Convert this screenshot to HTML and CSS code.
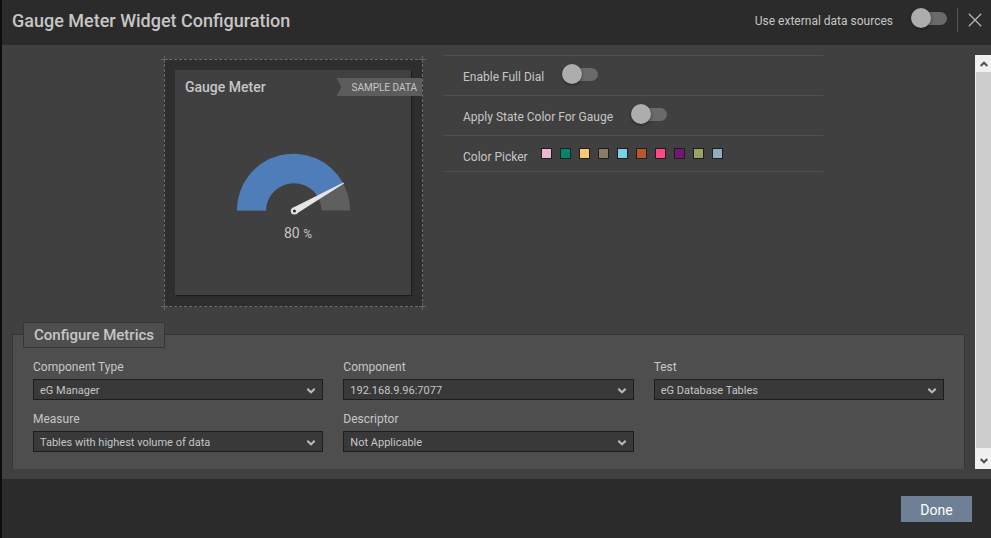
FILE: index.html
```html
<!DOCTYPE html>
<html lang="en">
<head>
<meta charset="utf-8">
<meta name="viewport" content="width=device-width, initial-scale=1">
<title>Gauge Meter Widget Configuration</title>
<link rel="stylesheet" href="styles.css">
</head>
<body>
<div class="dialog">
  <header class="header">
    <h1 class="title">Gauge Meter Widget Configuration</h1>
    <label class="header-label" for="external">Use external data sources</label>
    <input class="toggle" type="checkbox" id="external">
    <span class="divider"></span>
    <button class="close" type="button" aria-label="Close">
      <svg width="14" height="14" viewBox="0 0 14 14"><path d="M.8 .8 13.2 13.2M13.2 .8 .8 13.2" fill="none" stroke="#b4b4b4" stroke-width="1.3"/></svg>
    </button>
  </header>

  <main class="body">
    <div class="content">
      <div class="top">
        <div class="stage">
          <div class="frame">
            <span class="mark mark-tl"></span><span class="mark mark-tr"></span>
            <span class="mark mark-bl"></span><span class="mark mark-br"></span>
            <span class="ribbon">SAMPLE DATA</span>
            <section class="card">
              <h2 class="card-title">Gauge Meter</h2>
              <figure class="gauge">
                <svg width="116" height="64" viewBox="0 0 116 64" aria-hidden="true">
                  <path d="M2 58.5A56.5 56.5 0 0 1 115 58.5H86.5A28 28 0 0 0 30.500 58.5Z" fill="#5f5f5f"/>
                  <path d="M2 58.5A56.5 56.5 0 0 1 108 31L83 44.800A28 28 0 0 0 31 58.5Z" fill="#4f7dba"/>
                  <path d="M57.400 56 108.400 30.400 109 31.600 61 62Z" fill="#e6e6e6"/>
                  <circle cx="59.400" cy="59" r="2.600" fill="#333" stroke="#e6e6e6" stroke-width="2"/>
                </svg>
                <figcaption class="gauge-value">80 <span class="unit">%</span></figcaption>
              </figure>
            </section>
          </div>
        </div>
        <div class="settings">
          <div class="setting">
            <label for="dial">Enable Full Dial</label>
            <input class="toggle" type="checkbox" id="dial">
          </div>
          <div class="setting">
            <label for="state">Apply State Color For Gauge</label>
            <input class="toggle" type="checkbox" id="state">
          </div>
          <div class="setting setting-colors">
            <span>Color Picker</span>
            <div class="swatches">
              <button class="swatch pink" type="button" aria-label="Pink"></button>
              <button class="swatch green" type="button" aria-label="Green"></button>
              <button class="swatch yellow" type="button" aria-label="Yellow"></button>
              <button class="swatch taupe" type="button" aria-label="Taupe"></button>
              <button class="swatch sky" type="button" aria-label="Sky"></button>
              <button class="swatch rust" type="button" aria-label="Rust"></button>
              <button class="swatch rose" type="button" aria-label="Rose"></button>
              <button class="swatch purple" type="button" aria-label="Purple"></button>
              <button class="swatch olive" type="button" aria-label="Olive"></button>
              <button class="swatch slate" type="button" aria-label="Slate"></button>
            </div>
          </div>
        </div>
      </div>

      <section class="metrics">
        <h2 class="metrics-title">Configure Metrics</h2>
        <div class="fields">
          <div class="field">
            <label for="ctype">Component Type</label>
            <div class="picker"><select id="ctype"><option>eG Manager</option></select><svg class="arrow" width="8" height="6" viewBox="0 0 8 6"><path d="M.3 .8 4 4.3 7.7 .8" fill="none" stroke="#b8b8b8" stroke-width="2"/></svg></div>
          </div>
          <div class="field">
            <label for="component">Component</label>
            <div class="picker"><select id="component"><option>192.168.9.96:7077</option></select><svg class="arrow" width="8" height="6" viewBox="0 0 8 6"><path d="M.3 .8 4 4.3 7.7 .8" fill="none" stroke="#b8b8b8" stroke-width="2"/></svg></div>
          </div>
          <div class="field">
            <label for="test">Test</label>
            <div class="picker"><select id="test"><option>eG Database Tables</option></select><svg class="arrow" width="8" height="6" viewBox="0 0 8 6"><path d="M.3 .8 4 4.3 7.7 .8" fill="none" stroke="#b8b8b8" stroke-width="2"/></svg></div>
          </div>
          <div class="field">
            <label for="measure">Measure</label>
            <div class="picker"><select id="measure"><option>Tables with highest volume of data</option></select><svg class="arrow" width="8" height="6" viewBox="0 0 8 6"><path d="M.3 .8 4 4.3 7.7 .8" fill="none" stroke="#b8b8b8" stroke-width="2"/></svg></div>
          </div>
          <div class="field">
            <label for="descriptor">Descriptor</label>
            <div class="picker"><select id="descriptor"><option>Not Applicable</option></select><svg class="arrow" width="8" height="6" viewBox="0 0 8 6"><path d="M.3 .8 4 4.3 7.7 .8" fill="none" stroke="#b8b8b8" stroke-width="2"/></svg></div>
          </div>
        </div>
      </section>
    </div>

    <div class="scrollbar" aria-hidden="true">
      <span class="scroll-end"><svg width="8" height="6" viewBox="0 0 8 6"><path d="M.7 5 4 1.7 7.3 5" fill="none" stroke="#505050" stroke-width="2"/></svg></span>
      <span class="thumb"></span>
      <span class="scroll-end scroll-down"><svg width="8" height="6" viewBox="0 0 8 6"><path d="M.7 1 4 4.3 7.3 1" fill="none" stroke="#505050" stroke-width="2"/></svg></span>
    </div>
  </main>

  <footer class="footer">
    <button class="done" type="button">Done</button>
  </footer>
</div>
</body>
</html>
```
FILE: styles.css
```css
* { box-sizing: border-box; }

body {
  margin: 0;
  background: #404040;
  color: #c6c6c6;
  font: 12px/16px Roboto, sans-serif;
}

h1, h2, figure { margin: 0; }

button { padding: 0; border: 0; font: inherit; }

.dialog {
  display: flex;
  flex-direction: column;
  min-height: 100vh;
  border-left: 2px solid #0c0c0c;
}

.header {
  display: flex;
  align-items: center;
  height: 45px;
  padding: 0 9px 4px 10px;
  background: #2b2b2b;
}

.title {
  flex: 1;
  font-size: 18px;
  line-height: 24px;
  font-weight: 500;
}

.header-label { margin-right: 18px; }
.header .toggle { margin-bottom: 5px; }

.divider {
  width: 1px;
  height: 24px;
  margin: 0 10px 2px;
  background: #555;
}

.close { display: flex; margin-bottom: 2px; background: none; }

.toggle {
  appearance: none;
  position: relative;
  flex: none;
  width: 36px;
  height: 20px;
  margin: 0;
}

.toggle::before {
  content: "";
  position: absolute;
  inset: 4px 0 3px 2px;
  border-radius: 7px;
  background: #6a6a6a;
}

.toggle::after {
  content: "";
  position: absolute;
  top: 0;
  left: 0;
  width: 20px;
  height: 20px;
  border-radius: 50%;
  background: #adadad;
  box-shadow: 0 1px 3px rgba(0, 0, 0, .5);
}

.body {
  display: flex;
  flex: 1;
  gap: 10px;
  padding: 10px 0 10px 10px;
}

.content {
  display: flex;
  flex-direction: column;
  flex: 1;
}

.top { display: grid; grid-template-columns: 431px 380px; }

.stage {
  display: flex;
  justify-content: flex-end;
  padding: 4px 20px 27px 0;
}

.frame {
  position: relative;
  width: 259px;
  height: 248px;
  padding: 10px 11px 11px 10px;
  border: 1px dashed #6c6c6c;
  background: #2e2e2e;
}

.mark {
  position: absolute;
  width: 7px;
  height: 7px;
  background:
    linear-gradient(#666, #666) center / 7px 1px no-repeat,
    linear-gradient(#666, #666) center / 1px 7px no-repeat;
}

.mark-tl { top: -4px; left: -4px; }
.mark-tr { top: -4px; right: -4px; }
.mark-bl { bottom: -4px; left: -4px; }
.mark-br { bottom: -4px; right: -4px; }

.ribbon {
  position: absolute;
  top: 18px;
  right: 0;
  height: 18px;
  padding: 1px 5px 0 15px;
  background: #5c5c5c;
  clip-path: polygon(0 0, 100% 0, 100% 100%, 0 100%, 5px 50%);
  font-size: 10px;
  line-height: 18px;
}

.card {
  height: 100%;
  padding: 7px 10px;
  background: #404040;
  box-shadow: 1px 1px 1px #1d1d1d;
}

.card-title {
  font-size: 14px;
  line-height: 20px;
  font-weight: 500;
}

.gauge {
  display: flex;
  flex-direction: column;
  align-items: center;
  padding-top: 55px;
}

.gauge-value {
  margin: 7px 0 0 10px;
  font-size: 14px;
  line-height: 20px;
}

.unit { font-size: 12px; }

.settings { border-top: 1px solid #505050; align-self: start; }

.setting {
  display: flex;
  align-items: flex-start;
  gap: 18px;
  height: 40px;
  padding: 13px 20px 0;
  border-bottom: 1px solid #505050;
}

.setting .toggle { margin-top: -5px; }

.setting-colors { height: 36px; gap: 13px; }

.swatches { display: flex; gap: 8px; margin-top: -1px; }

.swatch { width: 11px; height: 11px; border: 1px solid #1d1d1d; }

.pink { background: #edb5cf; }
.green { background: #00876a; }
.yellow { background: #fac774; }
.taupe { background: #8a7d66; }
.sky { background: #7bd2e8; }
.rust { background: #b8572c; }
.rose { background: #ff4788; }
.purple { background: #751673; }
.olive { background: #98a465; }
.slate { background: #8eafba; }

.metrics {
  flex: 1;
  padding: 0 20px 16px;
  border: 1px solid #363636;
  border-bottom: 0;
  background: #4e4e4e;
}

.metrics-title {
  width: max-content;
  margin: -13px 0 11px -10px;
  padding: 0 10px;
  border: 1px solid #363636;
  background: #4e4e4e;
  font-size: 15px;
  line-height: 24px;
  font-weight: 500;
}

.fields {
  display: grid;
  grid-template-columns: repeat(3, 1fr);
  gap: 11px 20px;
}

.field label { display: block; line-height: 16px; margin-bottom: 4px; }

.picker { position: relative; display: flex; }

.picker select {
  appearance: none;
  width: 100%;
  height: 21px;
  padding: 2px 24px 0 6px;
  border: 1px solid #1d1d1d;
  border-radius: 0;
  background: #393939;
  color: #c6c6c6;
  font: 11px/16px Roboto, sans-serif;
}

.arrow { position: absolute; top: 9px; right: 8px; pointer-events: none; }

.scrollbar {
  display: flex;
  flex-direction: column;
  width: 16px;
  border-left: 1px solid #f0f0f0;
  background: #cdcdcd;
}

.scroll-end {
  display: flex;
  align-items: center;
  justify-content: center;
  height: 17px;
  background: #f0f0f0;
}

.scroll-down { height: 21px; padding-top: 4px; }

.thumb { flex: 1; background: #cdcdcd; }

.footer {
  display: flex;
  justify-content: flex-end;
  align-items: center;
  height: 59px;
  padding: 0 19px 0 0;
  background: #2b2b2b;
}

.done {
  min-width: 71px;
  height: 26px;
  padding-top: 2px;
  background: #6f7f95;
  color: #fff;
  font-size: 14px;
}
```
